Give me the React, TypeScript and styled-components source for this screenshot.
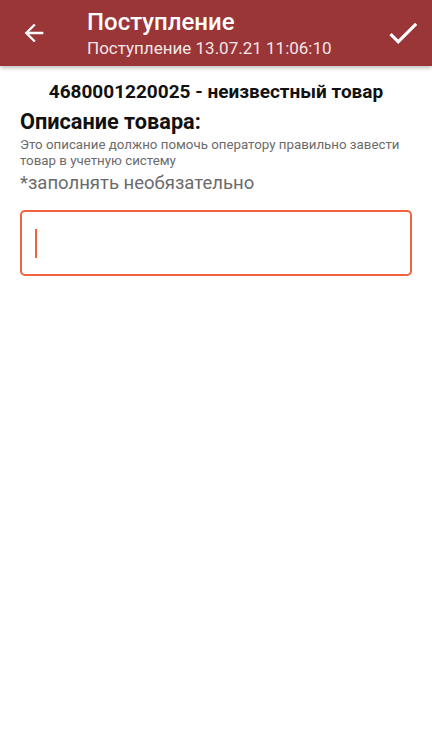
import styled, { createGlobalStyle } from "styled-components";

const Global = createGlobalStyle`
  html, body {
    margin:0;
    padding:0;
    background:#fff;
    font-family:Roboto, "Noto Sans", sans-serif;
  }
`

const Screen = styled.div`
  width:432px;
  min-height:738px;
  background:#fff;
`

const AppBar = styled.div`
  height:66px;
  background:#9a3538;
  box-shadow:0 2px 4px rgba(0,0,0,0.25);
  display:flex;
  align-items:center;
  color:white;
  position:relative;
`

const IconButton = styled.div<{w:number}>`
  width:${p => p.w}px;
  height:66px;
  display:flex;
  align-items:center;
  justify-content:center;
  flex-shrink:0;
`

const Titles = styled.div`
  flex:1;
  display:flex;
  flex-direction:column;
  padding-left:19px;

  >.title {
    font-size:24px;
    font-weight:500;
    line-height:28px;
  }

  >.subtitle {
    font-size:17px;
    line-height:20px;
    margin-top:2px;
    color:#f3e6e6;
  }
`

const Body = styled.div`
  padding:0 20px;
  display:flex;
  flex-direction:column;
`

const Heading = styled.div`
  text-align:center;
  font-size:19px;
  font-weight:700;
  color:#111;
  margin-top:14px;
  line-height:24px;
`

const Label = styled.div`
  font-size:21.7px;
  font-weight:700;
  color:#111;
  margin-top:6px;
  line-height:24px;
`

const Hint = styled.div`
  font-size:13.3px;
  color:#6b6b6b;
  line-height:16px;
  margin-top:3px;
`

const Optional = styled.div`
  font-size:18.5px;
  color:#6b6b6b;
  line-height:22px;
  margin-top:3px;
`

const Field = styled.div`
  margin-top:16px;
  height:62px;
  border:2px solid #f4613e;
  border-radius:5px;
  display:flex;
  align-items:center;
  padding-left:13px;

  >.cursor {
    width:2px;
    height:29px;
    background:#f4613e;
  }
`

const App = () => {
  return (<Screen>
    <Global />
    <AppBar>
      <IconButton w={68}>
        <svg width="28" height="28" viewBox="0 0 24 24">
          <path d="M20 11H7.83l5.59-5.59L12 4l-8 8 8 8 1.41-1.41L7.83 13H20v-2z" fill="white" />
        </svg>
      </IconButton>
      <Titles>
        <div className="title">Поступление</div>
        <div className="subtitle">Поступление 13.07.21 11:06:10</div>
      </Titles>
      <IconButton w={58}>
        <svg width="38" height="38" viewBox="0 0 24 24">
          <path d="M9 16.17L4.83 12l-1.42 1.41L9 19 21 7l-1.41-1.41z" fill="white" />
        </svg>
      </IconButton>
    </AppBar>
    <Body>
      <Heading>4680001220025 - неизвестный товар</Heading>
      <Label>Описание товара:</Label>
      <Hint>Это описание должно помочь оператору правильно завести товар в учетную систему</Hint>
      <Optional>*заполнять необязательно</Optional>
      <Field><div className="cursor"></div></Field>
    </Body>
  </Screen>)
};

export default App;
